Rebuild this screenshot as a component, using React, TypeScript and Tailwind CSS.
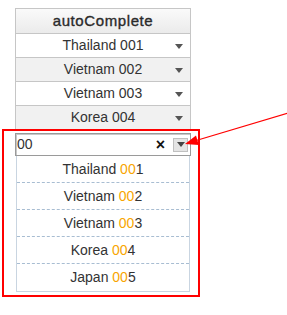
const rows = [
  { name: "Thailand 001", gray: false },
  { name: "Vietnam 002", gray: true },
  { name: "Vietnam 003", gray: false },
  { name: "Korea 004", gray: true },
];

const matches = [
  { name: "Thailand", code: "1" },
  { name: "Vietnam", code: "2" },
  { name: "Vietnam", code: "3" },
  { name: "Korea", code: "4" },
  { name: "Japan", code: "5" },
];

const Caret = ({ color = "#555" }: { color?: string }) => (
  <span
    className="block w-0 h-0 border-x-[4px] border-x-transparent border-t-[5px]"
    style={{ borderTopColor: color }}
  />
);

export default function App() {
  return (
    <div
      className="relative w-[287px] h-[315px] bg-white text-[#333] overflow-hidden"
      style={{ fontFamily: '"Liberation Sans", Arial, sans-serif' }}
    >
      <div className="pt-[8px]">
        {/* grid */}
        <div className="ml-[15px] w-[176px] border-x border-t border-[#c6c6c6]">
          <div className="h-[25px] flex items-center justify-center border-b border-[#c6c6c6] bg-gradient-to-b from-[#fafafa] to-[#ebebeb] text-[15px] tracking-[0.6px] text-[#2a2a2a] [-webkit-text-stroke:0.35px_#2a2a2a]">
            autoComplete
          </div>
          {rows.map((row) => (
            <div
              key={row.name}
              className={`h-[24px] grid grid-cols-[24px_1fr_24px] items-center border-b border-[#c6c6c6] text-[14px] ${
                row.gray ? "bg-[#f1f1f1]" : "bg-white"
              }`}
            >
              <span />
              <span className="text-center">{row.name}</span>
              <span className="flex justify-center pt-[2px] pl-[1px]">
                <Caret />
              </span>
            </div>
          ))}
        </div>

        {/* highlighted combobox */}
        <div className="-mt-[1px] ml-[2px] w-[198px] border-2 border-[#ff0000] pt-[2px] pb-[3px]">
          <div className="ml-[11px] w-[176px] h-[23px] flex items-center border border-[#9a9a9a] shadow-[inset_1px_1px_0_#c8c8c8] bg-white">
            <span className="pl-[1px] text-[14px] text-[#333] flex-1">00</span>
            <span className="text-[16px] font-bold text-[#111] leading-none mr-[8px]">×</span>
            <span className="w-[15px] h-[14px] mr-[2px] flex items-center justify-center bg-[#e4e4e4] border border-[#c0c0c0]">
              <Caret color="#444" />
            </span>
          </div>
          <div className="ml-[12px] w-[174px] border border-[#c9d5e1] border-t-0 bg-white">
            {matches.map((m, i) => (
              <div
                key={m.name + m.code}
                className={`h-[27px] flex items-center justify-center text-[14px] text-[#333] ${
                  i < matches.length - 1 ? "border-b border-dashed border-[#a8bdd2]" : ""
                }`}
              >
                {m.name}&nbsp;<span className="text-[#f8a500]">00</span>
                {m.code}
              </div>
            ))}
          </div>
        </div>
      </div>

      {/* annotation arrow */}
      <svg className="absolute left-0 top-0" width="287" height="315">
        <line x1="288" y1="113" x2="197" y2="140.3" stroke="#ff0000" strokeWidth="1.2" />
        <polygon points="185,144 198.8,145.1 196,135.5" fill="#ff0000" />
      </svg>
    </div>
  );
}
